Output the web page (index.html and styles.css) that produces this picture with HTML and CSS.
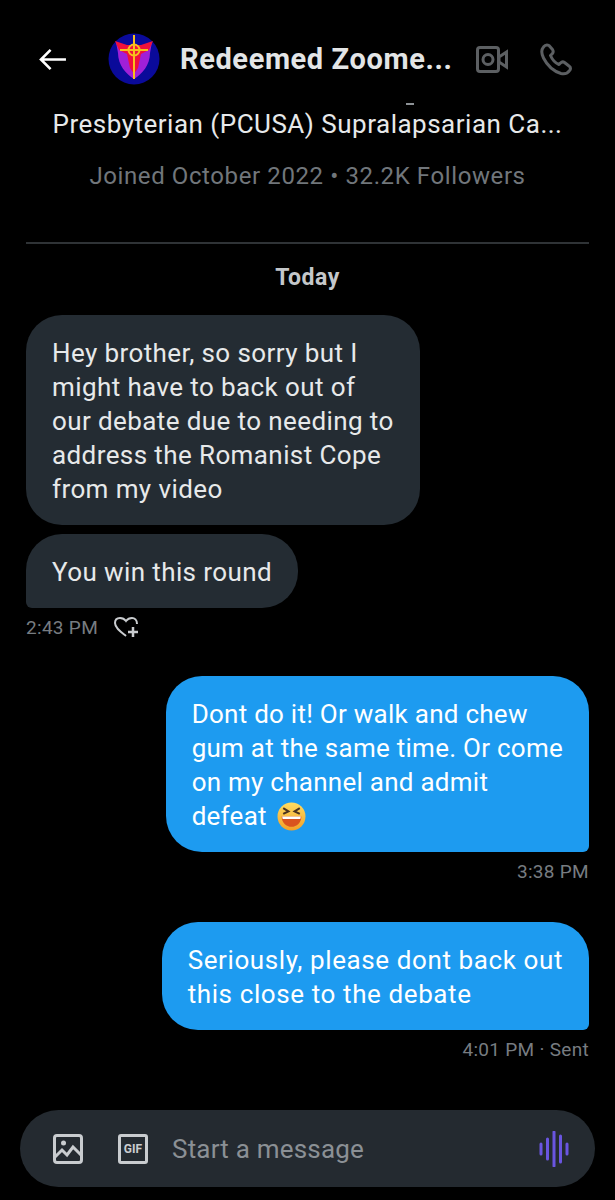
FILE: index.html
```html
<!DOCTYPE html>
<html lang="en">
<head>
<meta charset="utf-8">
<title>Redeemed Zoomer - Messages</title>
<link rel="stylesheet" href="styles.css">
</head>
<body>
<div class="screen">
  <header class="topbar">
    <svg class="back" viewBox="0 0 30 26" aria-hidden="true"><path d="M29 13H3M13 3 3 13l10 10" fill="none" stroke="#fff" stroke-width="2.700"/></svg>
    <svg class="avatar" viewBox="0 0 52 52" aria-hidden="true">
      <circle cx="26" cy="26" r="25.5" fill="#0a0a9a"/>
      <path d="M8 9 19 15H33L44 9 42 20C42 32 34 41 26 46 18 41 10 32 10 20Z" fill="#a020d8"/>
      <path d="M7 8 19 12H33L45 8 41 17 33 21 30 35 26 41 22 35 19 21 11 17Z" fill="#f0103c"/>
      <path d="M26 2V46M12 17H40" stroke="#f7c21c" stroke-width="2"/>
      <circle cx="26" cy="17" r="5.500" fill="none" stroke="#f7c21c" stroke-width="2"/>
    </svg>
    <h1 class="title">Redeemed Zoome...</h1>
    <div class="actions">
      <svg class="video" viewBox="0 0 32 27" aria-hidden="true">
        <rect x="1.500" y="1.500" width="21" height="24" rx="2.500" fill="none" stroke="#5c5f62" stroke-width="3"/>
        <circle cx="12" cy="13.500" r="5" fill="none" stroke="#5c5f62" stroke-width="3"/>
        <path d="M23 11 30.500 6V21L23 16Z" fill="none" stroke="#5c5f62" stroke-width="3"/>
      </svg>
      <svg class="phone" viewBox="0 0 32 33" aria-hidden="true">
        <path d="M9 2.500C7 1.500 5 2 3.500 4 1 7 1.500 11 3.500 15 7 22 13 28 21 30.500 25 31.500 28 30 30 27 31 25 30.500 24 29 23L24.500 19.500C23 18.500 22 18.500 20.500 20L19 21.500C15 20 12 16 10.500 12.500L12.500 10.500C13.500 9 13.500 8 12.500 6.500Z" fill="none" stroke="#5c5f62" stroke-width="3" stroke-linejoin="round"/>
      </svg>
    </div>
  </header>
  <span class="sliver"></span>

  <section class="profile">
    <p class="bio">Presbyterian (PCUSA) Supralapsarian Ca...</p>
    <p class="joined">Joined October 2022 • 32.2K Followers</p>
  </section>

  <main class="thread">
    <div class="day">Today</div>

    <div class="bubble incoming">Hey brother, so sorry but I<br>might have to back out of<br>our debate due to needing to<br>address the Romanist Cope<br>from my video</div>
    <div class="bubble incoming next tail-left">You win this round</div>
    <div class="meta meta-in">
      <span>2:43 PM</span>
      <svg class="react" viewBox="0 0 26 24" aria-hidden="true">
        <path d="M13 20C8 16 2 12 2 7 2 4 4 2 7 2 9.500 2 11.500 3 13 5 14.500 3 16.500 2 19 2 21.500 2 24 4 24 8" fill="none" stroke="#c9cccf" stroke-width="2"/>
        <path d="M20 11V21M15 16H25" stroke="#c9cccf" stroke-width="2.500"/>
      </svg>
    </div>

    <div class="bubble outgoing first">Dont do it! Or walk and chew<br>gum at the same time. Or come<br>on my channel and admit<br>defeat <svg class="emoji" viewBox="0 0 28 28" aria-hidden="true">
        <defs><linearGradient id="face" x1="0" y1="0" x2="0" y2="1"><stop offset="0" stop-color="#ffdc60"/><stop offset="1" stop-color="#f2a028"/></linearGradient></defs>
        <circle cx="14" cy="14" r="13.500" fill="url(#face)"/>
        <path d="M6 6 11 9 6 11.500M22 6 17 9 22 11.500" fill="none" stroke="#4a3320" stroke-width="2"/>
        <path d="M4.500 14H23.500C23.500 20 19 24 14 24S4.500 20 4.500 14Z" fill="#d9541e"/>
        <path d="M5 14H23L22.500 16.500H5.500Z" fill="#fff"/>
      </svg></div>
    <div class="meta meta-out">3:38 PM</div>

    <div class="bubble outgoing second">Seriously, please dont back out<br>this close to the debate</div>
    <div class="meta meta-out">4:01 PM · Sent</div>
  </main>

  <footer class="composer">
    <svg class="tool" viewBox="0 0 30 30" aria-hidden="true">
      <rect x="1.500" y="1.500" width="27" height="27" rx="2.500" fill="none" stroke="#c9cccf" stroke-width="3"/>
      <circle cx="10.500" cy="9" r="2.500" fill="#c9cccf"/>
      <path d="M2 23 9 16 14 21 20 13 28 21" fill="none" stroke="#c9cccf" stroke-width="3"/>
    </svg>
    <span class="gif">GIF</span>
    <span class="placeholder">Start a message</span>
    <svg class="voice" viewBox="0 0 30 36" aria-hidden="true">
      <path d="M2 13V23M8.500 8V28M15 1V35M21.500 5V31M28 13V23" stroke="#6a55e0" stroke-width="3" stroke-linecap="round"/>
    </svg>
  </footer>
</div>
</body>
</html>
```

FILE: styles.css
```css
* { box-sizing: border-box; }

html, body { margin: 0; background: #000; }

.screen {
  width: 615px;
  height: 1200px;
  overflow: hidden;
  display: flex;
  flex-direction: column;
  font-family: Roboto, "Noto Sans", sans-serif;
  color: #e7e9ea;
}

/* Top bar */
.topbar {
  display: flex;
  align-items: center;
  height: 100px;
  padding: 18px 0 0 38px;
  flex: none;
}
.back { width: 29px; height: 25px; flex: none; }
.avatar { width: 52px; height: 52px; margin-left: 41px; flex: none; }
.title {
  margin: 0 0 0 20px;
  width: 280px;
  font-size: 29px;
  font-weight: 700;
  letter-spacing: 0.6px;
  line-height: 34px;
  color: #e3e5e6;
  white-space: nowrap;
}
.actions { display: flex; align-items: center; gap: 32px; margin-left: 16px; }
.video { width: 32px; height: 27px; flex: none; }
.phone { width: 32px; height: 33px; flex: none; }
.sliver {
  align-self: flex-start;
  width: 8px;
  height: 2px;
  margin: 3px 0 0 406px;
  background: #8d9296;
  flex: none;
}

/* Profile summary */
.profile { flex: none; text-align: center; }
.bio {
  margin: 2px 0 0;
  font-size: 26px;
  letter-spacing: 0.5px;
  line-height: 34px;
  color: #e7e9ea;
  white-space: nowrap;
}
.joined {
  margin: 18px 0 0;
  font-size: 24px;
  letter-spacing: 0.6px;
  line-height: 34px;
  color: #71767b;
  white-space: nowrap;
}

/* Message thread */
.thread {
  flex: 1;
  margin: 49px 26px 0;
  padding-top: 20px;
  border-top: 2px solid #2f3336;
  display: flex;
  flex-direction: column;
}
.day {
  align-self: center;
  font-size: 23px;
  font-weight: 700;
  letter-spacing: 0.5px;
  line-height: 28px;
  color: #c4c7ca;
}
.bubble {
  padding: 21px 26px 19px;
  font-size: 26px;
  letter-spacing: 0.4px;
  line-height: 34px;
  border-radius: 36px;
  width: fit-content;
  white-space: nowrap;
}
.incoming { background: #242c33; color: #e7e9ea; align-self: flex-start; }
.incoming:not(.next) { margin-top: 23px; }
.next { margin-top: 9px; }
.tail-left { border-bottom-left-radius: 6px; }
.outgoing {
  background: #1d9bf0;
  color: #fff;
  align-self: flex-end;
  border-bottom-right-radius: 6px;
}
.first { margin-top: 36px; letter-spacing: 0.26px; }
.second { margin-top: 38px; letter-spacing: 0.6px; }
.emoji { width: 29px; height: 29px; margin-left: 3px; vertical-align: -6px; }
.meta {
  font-size: 19px;
  letter-spacing: 0.3px;
  line-height: 24px;
  color: #777c81;
  margin-top: 8px;
}
.meta-in { display: flex; align-items: center; gap: 15px; }
.meta-out { align-self: flex-end; }
.react { width: 26px; height: 24px; }

/* Message composer */
.composer {
  flex: none;
  display: flex;
  align-items: center;
  height: 77px;
  margin: 0 20px 13px;
  padding: 0 26px 0 33px;
  background: #242a30;
  border-radius: 39px;
}
.tool { width: 30px; height: 30px; flex: none; }
.gif {
  width: 30px;
  height: 30px;
  margin-left: 35px;
  flex: none;
  border: 3px solid #c9cccf;
  border-radius: 3px;
  font-size: 12px;
  font-weight: 700;
  line-height: 24px;
  text-align: center;
  color: #c9cccf;
}
.placeholder {
  flex: 1;
  margin-left: 24px;
  font-size: 26px;
  letter-spacing: 0.2px;
  color: #8b9095;
}
.voice { width: 30px; height: 36px; flex: none; }
```
